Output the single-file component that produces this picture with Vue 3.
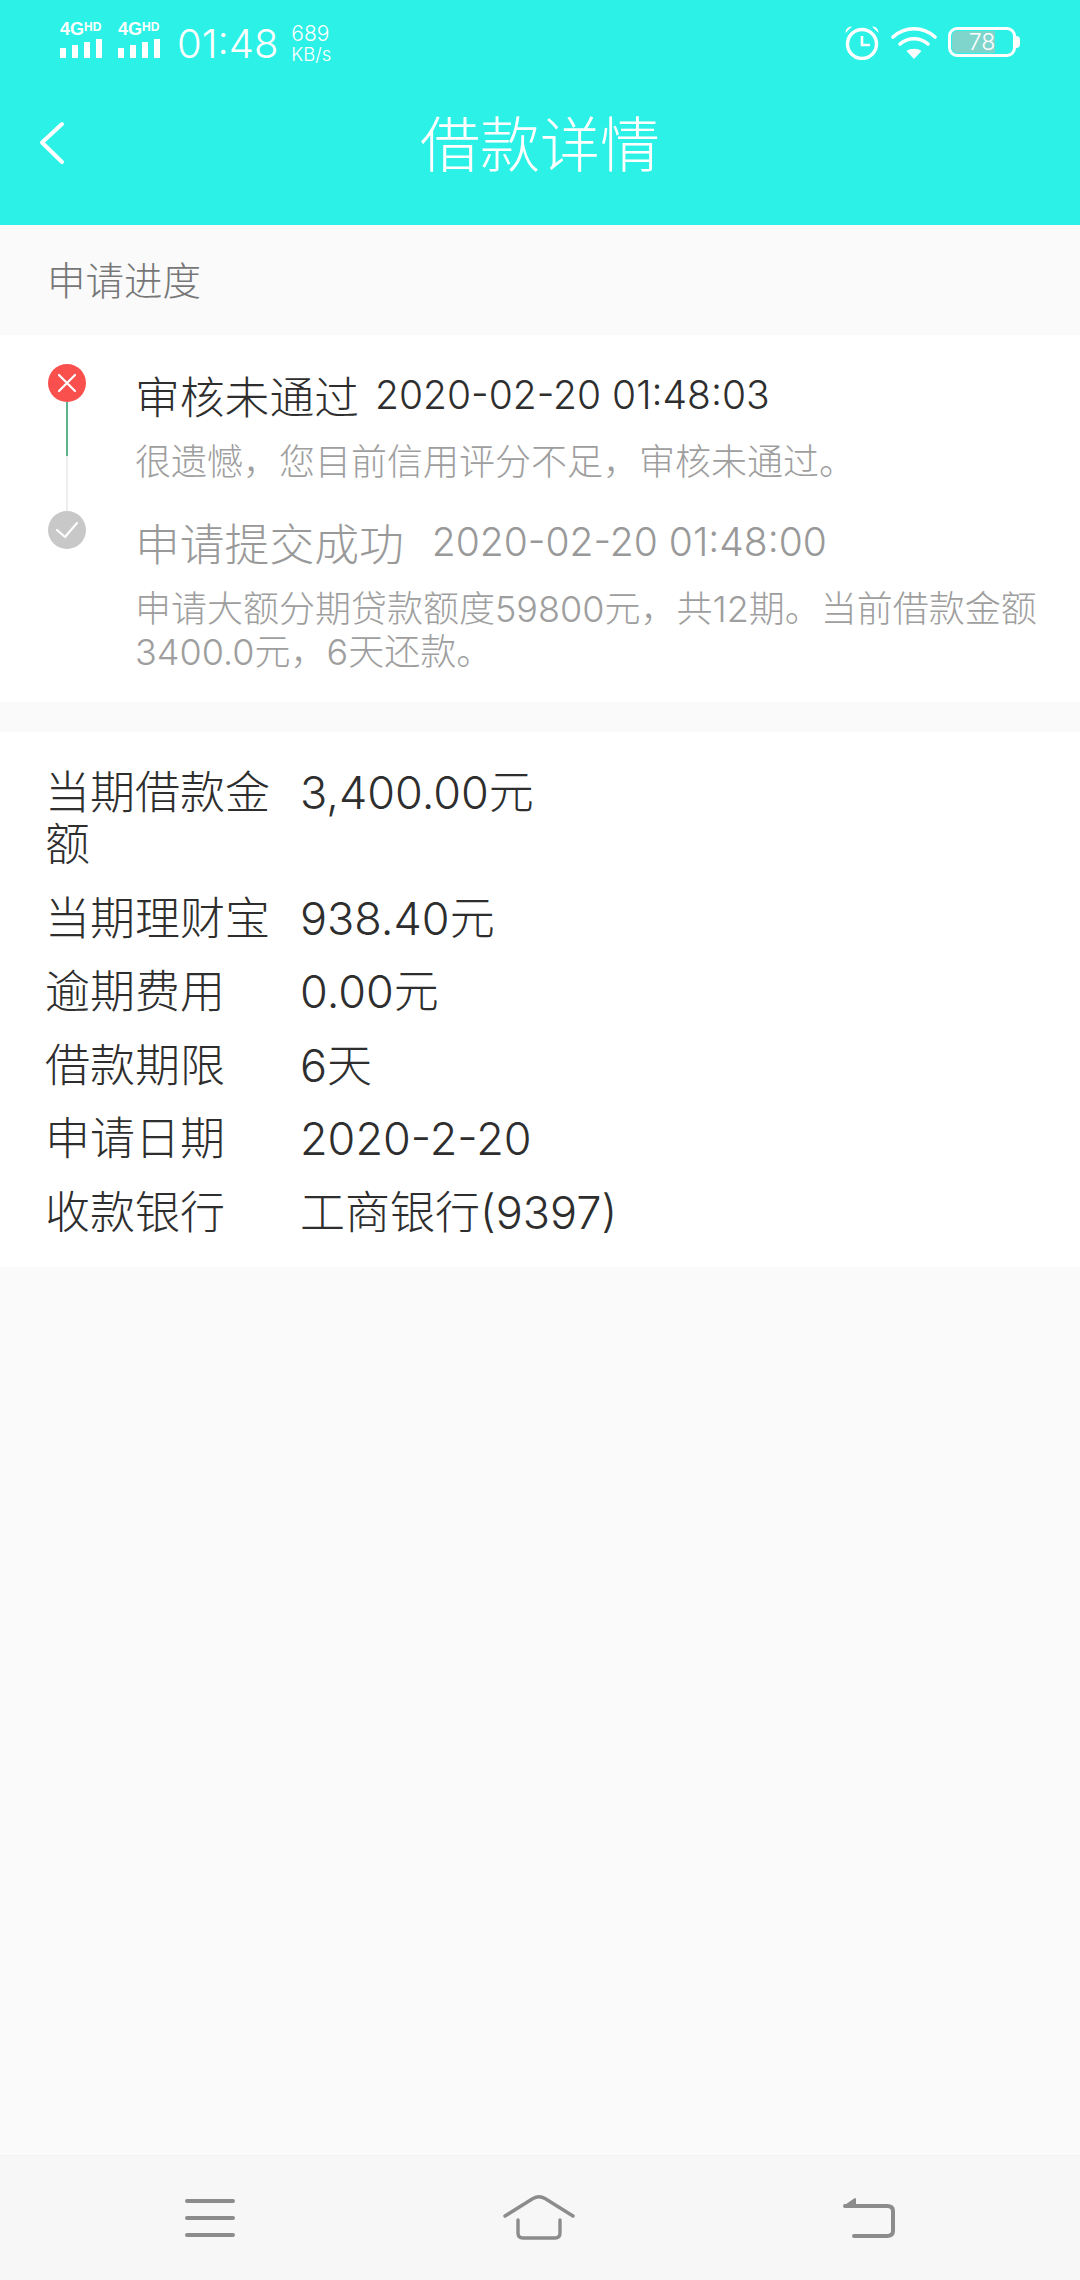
<script setup>
const details = [
  { label: '当期借款金额', value: '3,400.00元' },
  { label: '当期理财宝', value: '938.40元' },
  { label: '逾期费用', value: '0.00元' },
  { label: '借款期限', value: '6天' },
  { label: '申请日期', value: '2020-2-20' },
  { label: '收款银行', value: '工商银行(9397)' },
]
</script>

<template>
  <div class="page">
    <header class="header">
      <div class="status">
        <div class="signal" v-for="n in 2" :key="n">
          <div class="net">4G<span>HD</span></div>
          <div class="bars"><i></i><i></i><i></i><i></i></div>
        </div>
        <span class="time">01:48</span>
        <div class="speed"><span>689</span><span class="unit">KB/s</span></div>
        <div class="status-right">
          <svg class="alarm" width="36" height="36" viewBox="0 0 36 36" fill="none" stroke="#fff">
            <circle cx="18" cy="20" r="14.5" stroke-width="3.4" />
            <path d="M18 12v9h8" stroke-width="2.6" />
            <path d="M1.5 9 8 2.500c-3.400-.6-6.500 2.400-6.500 6.500zM34.500 9 28 2.500c3.400-.6 6.500 2.400 6.500 6.500z" fill="#fff" stroke="none" />
          </svg>
          <svg class="wifi" width="46" height="36" viewBox="0 0 46 36" fill="none" stroke="#fff" stroke-width="3.600" stroke-linecap="round">
            <path d="M2 13C14 2 32 2 44 13" />
            <path d="M9 20c8-7 20-7 28 0" />
            <path d="M15.500 27c4-3 11-3 15 0L23 35z" fill="#fff" stroke="none" />
          </svg>
          <div class="battery">
            <div class="battery-body"><div class="battery-fill"></div><span>78</span></div>
            <div class="battery-cap"></div>
          </div>
        </div>
      </div>
      <div class="titlebar">
        <svg class="back" width="28" height="44" viewBox="0 0 28 44" fill="none" stroke="#fff" stroke-width="4" stroke-linecap="round" stroke-linejoin="round">
          <path d="M23 3 3 21.500 23 41" />
        </svg>
        <h1>借款详情</h1>
      </div>
    </header>

    <div class="section-label">申请进度</div>

    <section class="progress">
      <div class="step">
        <div class="rail">
          <div class="dot dot-fail">
            <svg width="20" height="20" viewBox="0 0 20 20" stroke="#fff" stroke-width="2.200" stroke-linecap="round"><path d="M2 2l16 16M18 2 2 18" /></svg>
          </div>
          <div class="line line-green"></div>
          <div class="line line-grey"></div>
        </div>
        <div class="step-body">
          <div class="step-head">
            <span class="step-title">审核未通过</span>
            <span class="step-time">2020-02-20 01:48:03</span>
          </div>
          <p class="step-desc">很遗憾，您目前信用评分不足，审核未通过。</p>
        </div>
      </div>
      <div class="step step-done">
        <div class="rail">
          <div class="dot dot-done">
            <svg width="24" height="18" viewBox="0 0 24 18" fill="none" stroke="#fff" stroke-width="2.200" stroke-linecap="round" stroke-linejoin="round"><path d="M2 9l8 7L22 2" /></svg>
          </div>
        </div>
        <div class="step-body">
          <div class="step-head">
            <span class="step-title">申请提交成功</span>
            <span class="step-time">2020-02-20 01:48:00</span>
          </div>
          <p class="step-desc">申请大额分期贷款额度59800元，共12期。当前借款金额3400.0元，6天还款。</p>
        </div>
      </div>
    </section>

    <section class="details">
      <div class="row" v-for="item in details" :key="item.label">
        <div class="row-label">{{ item.label }}</div>
        <div class="row-value">{{ item.value }}</div>
      </div>
    </section>

    <div class="spacer"></div>

    <nav class="navbar">
      <svg width="50" height="40" viewBox="0 0 50 40" stroke="#8c8c8c" stroke-width="4" stroke-linecap="round">
        <path d="M2 3h46M2 20h46M2 37h46" />
      </svg>
      <svg width="72" height="46" viewBox="0 0 72 46" fill="none" stroke="#8c8c8c" stroke-width="3.400" stroke-linecap="round" stroke-linejoin="round">
        <path d="M2 21 30 3.500q6-3.500 12 0L70 21" />
        <path d="M15 25v13q0 5 5 5h32q5 0 5-5V25" />
      </svg>
      <svg width="52" height="42" viewBox="0 0 52 42" fill="none" stroke="#8c8c8c" stroke-width="4" stroke-linecap="round" stroke-linejoin="round">
        <path d="M2 9h42q6 0 6 5v20q0 5-6 5H11" />
        <path d="M2 9 12 2v7z" fill="#8c8c8c" stroke-width="2" />
      </svg>
    </nav>
  </div>
</template>

<style scoped>
.page {
  display: flex;
  flex-direction: column;
  width: 1080px;
  height: 2280px;
  background: #fafafa;
  font-family: Inter, "Noto Sans CJK SC", "Noto Sans", sans-serif;
  font-weight: 300;
  overflow: hidden;
}

.header {
  height: 225px;
  background: #2cf1e6;
  color: #fff;
}

.status {
  display: flex;
  align-items: center;
  height: 80px;
  padding: 0 60px;
}

.signal {
  width: 58px;
  display: flex;
  flex-direction: column;
}

.net {
  font: bold 18px/15px "Liberation Sans", sans-serif;
  white-space: nowrap;
}

.net span {
  font-size: 12px;
  position: relative;
  top: -4px;
}

.bars {
  display: flex;
  align-items: flex-end;
  gap: 6px;
  height: 19px;
}

.bars i {
  width: 6px;
  background: #fff;
}

.bars i:nth-child(1) { height: 10px; }
.bars i:nth-child(2) { height: 13px; }
.bars i:nth-child(3) { height: 16px; }
.bars i:nth-child(4) { height: 19px; }

.time {
  font-size: 40px;
  line-height: 1;
  margin: 8px 0 0 1px;
}

.speed {
  display: flex;
  flex-direction: column;
  margin: 8px 0 0 13px;
  font-size: 21px;
  line-height: 20px;
}

.speed .unit {
  font-size: 18.5px;
}

.status-right {
  display: flex;
  align-items: center;
  gap: 11px;
  margin: 4px 0 0 auto;
}

.battery {
  display: flex;
  align-items: center;
}

.battery-body {
  position: relative;
  width: 68px;
  height: 30px;
  box-sizing: border-box;
  border: 3px solid #fff;
  border-radius: 9px;
  padding: 1px;
}

.battery-fill {
  width: 72%;
  height: 100%;
  background: #7fd4cc;
  border-radius: 5px 0 0 5px;
}

.battery-body span {
  position: absolute;
  inset: 0;
  text-align: center;
  font-size: 23px;
  line-height: 24px;
}

.battery-cap {
  width: 4px;
  height: 12px;
  background: #fff;
  border-radius: 0 4px 4px 0;
}

.titlebar {
  position: relative;
  height: 145px;
  box-sizing: border-box;
  padding-bottom: 24px;
  display: flex;
  align-items: center;
  justify-content: center;
}

.back {
  position: absolute;
  left: 39px;
  top: 41px;
}

h1 {
  margin: 0;
  font-size: 60px;
  font-weight: 300;
}

.section-label {
  height: 110px;
  padding-left: 47px;
  line-height: 112px;
  font-size: 38.5px;
  color: #777;
}

.progress {
  background: #fff;
  height: 367px;
  box-sizing: border-box;
  padding-top: 29px;
}

.step {
  display: flex;
}

.rail {
  width: 135px;
  flex: none;
  display: flex;
  flex-direction: column;
  align-items: center;
  box-sizing: border-box;
  padding-right: 1px;
}

.dot {
  width: 38px;
  height: 38px;
  border-radius: 50%;
  display: flex;
  align-items: center;
  justify-content: center;
  flex: none;
}

.dot-fail { background: #f9504e; }
.dot-done { background: #c8c8c8; }

.line {
  width: 2px;
}

.line-green {
  height: 54px;
  background: #5bb38b;
}

.line-grey {
  height: 55px;
  background: #eeeeee;
}

.step-body {
  min-width: 0;
  padding-right: 30px;
}

.step-head {
  display: flex;
  align-items: center;
  height: 60px;
}

.step-title {
  font-size: 44.8px;
  color: #2e2e2e;
  white-space: nowrap;
}

.step-time {
  font-size: 39px;
  color: #2e2e2e;
  margin-left: 16px;
  white-space: nowrap;
}

.step-done .step-title,
.step-done .step-time {
  color: #999;
}

.step-done .step-time {
  margin-left: 28px;
}

.step-desc {
  margin: 17px 0 0;
  font-size: 36px;
  line-height: 43px;
  color: #9e9e9e;
}

.details {
  margin-top: 30px;
  background: #fff;
  height: 535px;
  box-sizing: border-box;
  padding-top: 35px;
}

.row {
  display: grid;
  grid-template-columns: 228px 1fr;
  column-gap: 27px;
  padding-left: 45px;
  font-size: 45px;
  line-height: 52px;
  color: #2e2e2e;
  margin-bottom: 21.5px;
}

.spacer {
  flex: 1;
}

.navbar {
  height: 125px;
  background: #f7f7f7;
  border-top: 1px solid #f2f2f2;
  box-sizing: border-box;
  display: flex;
  align-items: center;
  justify-content: space-between;
  padding: 0 185px;
}
</style>
